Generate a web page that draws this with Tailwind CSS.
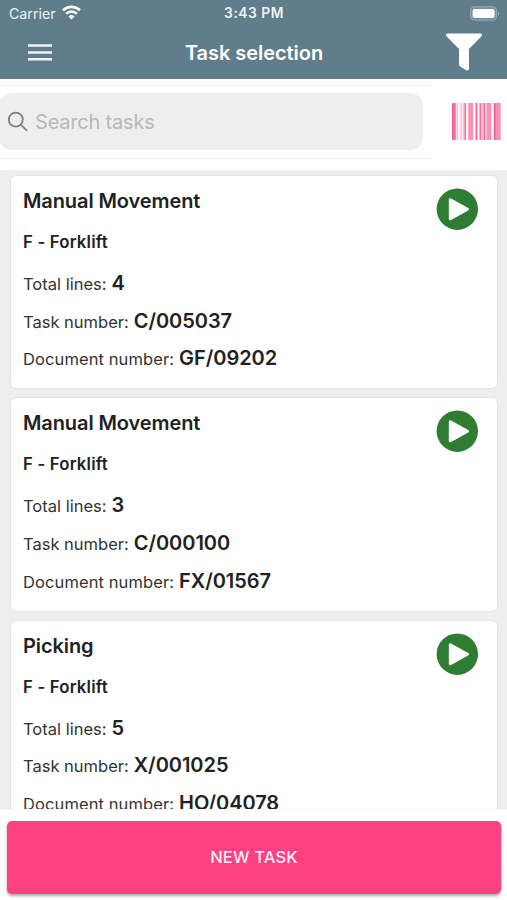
<!DOCTYPE html>
<html lang="en">
<head>
<meta charset="utf-8">
<title>Task selection</title>
<script src="https://cdn.jsdelivr.net/npm/@tailwindcss/browser@4"></script>
</head>
<body class="bg-white">
<div class="w-[507px] h-[900px] overflow-hidden flex flex-col bg-[#eeeeee] font-['Inter','Liberation_Sans',sans-serif] text-[#222222]">
  <header class="h-[79px] shrink-0 bg-[#607d8b] text-white flex flex-col">
    <div class="h-[27px] shrink-0 grid grid-cols-3 items-center pl-[9px] pr-[7px] text-[14px] leading-[27px]">
      <div class="flex items-center gap-[6px]">
        <span class="text-[14.2px] text-white/90">Carrier</span>
        <svg class="w-[19px] h-[15px] -mt-[2px]" viewBox="0 0 19 15" fill="none" stroke="white" stroke-width="2.7"><path d="M1 5.3a12.2 12.2 0 0 1 17 0M4.2 8.7a7.5 7.5 0 0 1 10.6 0"/><path d="M9.5 14.4 6.5 11.4a4.3 4.3 0 0 1 6 0z" fill="white" stroke="none"/></svg>
      </div>
      <div class="text-center font-semibold text-[13.8px] tracking-[0.5px] text-white/90 pr-[1px]"><span>3:43 PM</span></div>
      <div class="flex justify-end"><svg class="w-[31px] h-[15px]" viewBox="0 0 31 15"><rect x="1.6" y=".8" width="26" height="13.4" rx="4" fill="white" fill-opacity=".15" stroke="white" stroke-opacity=".3" stroke-width="1.1"/><rect x="3.6" y="3" width="22" height="9" rx="2" fill="white"/><path d="M29 5.2q2 2.3 0 4.6z" fill="white" fill-opacity=".5"/></svg></div>
    </div>
    <div class="h-[52px] flex items-center justify-between pl-[28px] pr-[24px]">
      <svg class="w-[50px] h-[17px] -mt-[2px]" viewBox="0 0 50 17" fill="#f0f2fa"><path d="M0 .2h24v2.6H0zM0 7.2h24v2.6H0zM0 14h24v2.6H0z"/></svg>
      <h1 class="text-[20px] leading-[52px] font-semibold tracking-[-0.05px] whitespace-nowrap ml-[4.5px] -mt-px">Task selection</h1>
      <svg class="w-[38px] h-[38px] ml-[19.5px] mt-[-2px]" viewBox="0 0 38 38"><path d="M2 .5h34q1.8.8.8 2.6L24 16v20q-.6 2-2.7 1.2L15 33.3q-1-.8-1-2V16L1.2 3.1Q.2 1.3 2 .5z" fill="white"/></svg>
    </div>
  </header>
  <div class="h-[91px] shrink-0 bg-white flex items-start justify-between pt-[6px] pr-[6px]">
    <div class="w-[432px] h-[74px] border-y border-[#eeeeee] pt-[7px]">
      <div class="w-[424px] h-[57px] -ml-px rounded-[13px] bg-[#eeeeee] flex items-center pl-[8px] gap-[7px]">
        <svg class="w-[21px] h-[21px]" viewBox="0 0 21 21" fill="none" stroke="#808083" stroke-width="1.8"><circle cx="8.8" cy="8.6" r="7"/><path d="m13.9 13.7 6.2 6.2"/></svg>
        <span class="text-[20px] leading-[24px] tracking-[-0.2px] text-[#b8b8ba]">Search tasks</span>
      </div>
    </div>
    <svg class="w-[50px] h-[37px] mt-[18px]" viewBox="0 0 50 37"><path d="M1 0H50v37H1z" fill="#fff0f5"/><path d="M1.5 0h2.5v37H1.5zM24.5 0h2v37h-2zM28.5 0h1.6v37h-1.6z" fill="#f96d99"/><path d="M1 0h1v37H1zM13.4 0h1.4v37h-1.4zM32.7 0h1.4v37h-1.4zM42.8 0h2v37h-2z" fill="#ec5d8a"/><path d="M4 0h1v37H4zM17.3 0h5v37h-5zM35.5 0h4.8v37h-4.8zM44.8 0h4.2v37h-4.2z" fill="#fa93b3"/><path d="M5.8 0h1.1v37H5.8zM9.4 0h1.2v37H9.4zM12.2 0h1v37h-1zM30.6 0h1.4v37h-1.4zM49 0h1v37h-1z" fill="#f7b2c9"/><path d="M7.4 0h1.3v37H7.4zM15.7 0h1v37h-1zM22.7 0h1.3v37h-1.3zM26.9 0h1.2v37h-1.2zM40.9 0h1.4v37h-1.4z" fill="white"/></svg>
  </div>
  <main id="tasks" class="h-[639px] shrink-0 overflow-hidden pt-[6px] px-[10px] flex flex-col gap-[10px]"></main>
  <footer class="h-[91px] shrink-0 bg-white border-t border-[#f7f7f7] pt-[11px] px-[7px]">
    <button class="block w-[494px] h-[73px] rounded-[5px] bg-[#ff4081] text-white/95 text-[16.5px] tracking-[0.15px] font-medium shadow-[0_2px_3px_rgba(0,0,0,0.35)]"><span>NEW TASK</span></button>
  </footer>
</div>
<template id="card">
  <article class="h-[212.3px] shrink-0 ml-[1px] w-[486px] rounded-[5px] bg-white shadow-[0_0_2px_rgba(0,0,0,0.16)] pl-[12px] pr-[19px] flex justify-between">
    <div class="pt-[13px] whitespace-nowrap">
      <h2 class="text-[20px] leading-[24px] font-semibold tracking-[-0.1px]"></h2>
      <p class="mt-[17px] text-[16.8px] leading-[24px] font-semibold tracking-[0.18px]">F - Forklift</p>
      <dl class="mt-[11px] text-[16.5px]">
        <div class="h-[37.7px] flex items-baseline gap-[5px] leading-[37.7px]"><dt class="text-[#333333]">Total lines:</dt><dd class="text-[20px] font-semibold"></dd></div>
        <div class="h-[37.7px] flex items-baseline gap-[5px] leading-[37.7px]"><dt class="text-[#333333]">Task number:</dt><dd class="text-[20px] font-semibold tracking-[-0.05px]"></dd></div>
        <div class="h-[37.7px] flex items-baseline gap-[5px] leading-[37.7px]"><dt class="text-[#333333] tracking-[0.1px]">Document number:</dt><dd class="text-[20px] font-semibold tracking-[-0.05px]"></dd></div>
      </dl>
    </div>
    <svg class="w-[42px] h-[42px] mt-[12px]" viewBox="0 0 42 42"><circle cx="21.3" cy="21.2" r="20.7" fill="#2e7d32"/><path d="M14.3 11.7v19l17.2-9.5z" fill="white" stroke="white" stroke-width="3" stroke-linejoin="round"/></svg>
  </article>
</template>
<script>
const tasks = [
  ["Manual Movement", "4", "C/005037", "GF/09202"],
  ["Manual Movement", "3", "C/000100", "FX/01567"],
  ["Picking", "5", "X/001025", "HO/04078"]
];
for (const task of tasks) {
  const card = document.getElementById("card").content.cloneNode(true);
  card.querySelectorAll("h2, dd").forEach((el, i) => { el.textContent = task[i]; });
  document.getElementById("tasks").append(card);
}
</script>
</body>
</html>
